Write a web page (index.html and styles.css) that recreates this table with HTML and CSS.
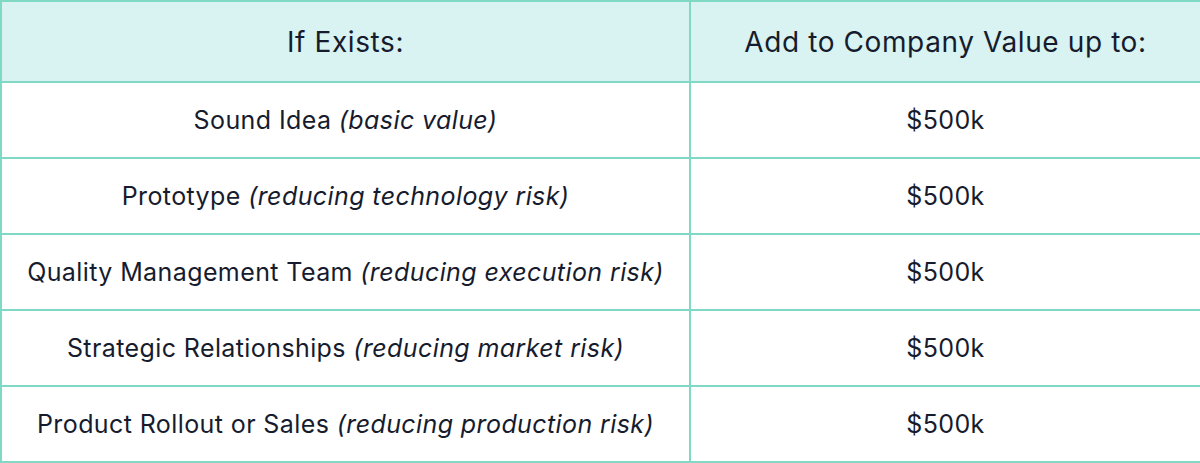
FILE: index.html
```html
<!DOCTYPE html>
<html>
<head>
<meta charset="utf-8">
<link rel="stylesheet" href="styles.css">
</head>
<body>
<table class="value-table">
  <colgroup>
    <col class="col-left">
    <col class="col-right">
  </colgroup>
  <thead>
    <tr>
      <th>If Exists:</th>
      <th>Add to Company Value up to:</th>
    </tr>
  </thead>
  <tbody>
    <tr><td>Sound Idea <em>(basic value)</em></td><td>$500k</td></tr>
    <tr><td>Prototype <em>(reducing technology risk)</em></td><td>$500k</td></tr>
    <tr><td>Quality Management Team <em>(reducing execution risk)</em></td><td>$500k</td></tr>
    <tr><td>Strategic Relationships <em>(reducing market risk)</em></td><td>$500k</td></tr>
    <tr><td>Product Rollout or Sales <em>(reducing production risk)</em></td><td>$500k</td></tr>
  </tbody>
</table>
</body>
</html>
```
FILE: styles.css
```css
html, body {
  margin: 0;
  padding: 0;
  background: #ffffff;
}
.value-table {
  width: 1200px;
  border-collapse: collapse;
  table-layout: fixed;
  font-family: Inter, "Noto Sans", sans-serif;
  color: #161c2d;
}
.col-left { width: 689px; }
.col-right { width: 511px; }
.value-table th,
.value-table td {
  border: 2px solid #80d9c5;
  text-align: center;
  vertical-align: middle;
  padding: 0;
}
.value-table th {
  background: #d8f3f2;
  font-weight: 400;
  font-size: 28px;
  letter-spacing: 0.6px;
  height: 79px;
}
.value-table td {
  font-size: 25px;
  letter-spacing: 0.4px;
  height: 74px;
}
.value-table em {
  font-style: italic;
}
```
